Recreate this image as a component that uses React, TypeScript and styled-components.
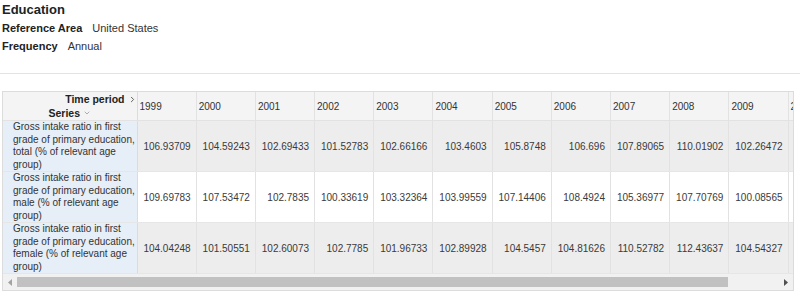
import * as React from "react";
import styled, { createGlobalStyle } from "styled-components";
import { ChevronDown, ChevronRight } from "lucide-react";

const years = [
  "1999", "2000", "2001", "2002", "2003", "2004",
  "2005", "2006", "2007", "2008", "2009", "2010",
];

const series = [
  {
    label: "Gross intake ratio in first grade of primary education, total (% of relevant age group)",
    values: ["106.93709", "104.59243", "102.69433", "101.52783", "102.66166", "103.4603", "105.8748", "106.696", "107.89065", "110.01902", "102.26472", ""],
  },
  {
    label: "Gross intake ratio in first grade of primary education, male (% of relevant age group)",
    values: ["109.69783", "107.53472", "102.7835", "100.33619", "103.32364", "103.99559", "107.14406", "108.4924", "105.36977", "107.70769", "100.08565", ""],
  },
  {
    label: "Gross intake ratio in first grade of primary education, female (% of relevant age group)",
    values: ["104.04248", "101.50551", "102.60073", "102.7785", "101.96733", "102.89928", "104.5457", "104.81626", "110.52782", "112.43637", "104.54327", ""],
  },
];

const SERIES_COL = 134;
const YEAR_COL = 59.2;

const GlobalStyle = createGlobalStyle`
  html, body {
    margin: 0;
    padding: 0;
    background: #ffffff;
  }
  body {
    font-family: "Liberation Sans", Arial, sans-serif;
    color: #333333;
  }
`;

export default function App() {
  return (
    <>
      <GlobalStyle />
      <Page>
        <Title>Education</Title>
        <MetaRow>
          <MetaLabel>Reference Area</MetaLabel>
          <MetaValue>United States</MetaValue>
        </MetaRow>
        <MetaRow>
          <MetaLabel>Frequency</MetaLabel>
          <MetaValue>Annual</MetaValue>
        </MetaRow>
        <Divider />
        <GridFrame>
          <Viewport>
            <DataTable>
              <colgroup>
                <col style={{ width: SERIES_COL }} />
                {years.map((y) => (
                  <col key={y} style={{ width: YEAR_COL }} />
                ))}
              </colgroup>
              <thead>
                <tr>
                  <CornerCell>
                    <AxisLine $align="right">
                      Time period
                      <ChevronRight size={9} strokeWidth={2.5} color="#555" />
                    </AxisLine>
                    <AxisLine $align="center">
                      Series
                      <ChevronDown size={8} strokeWidth={2} color="#888" />
                    </AxisLine>
                  </CornerCell>
                  {years.map((y) => (
                    <YearCell key={y}>{y}</YearCell>
                  ))}
                </tr>
              </thead>
              <tbody>
                {series.map((s, i) => (
                  <DataRow key={s.label} $shaded={i % 2 === 0}>
                    <SeriesCell>{s.label}</SeriesCell>
                    {s.values.map((v, j) => (
                      <ValueCell key={j}>{v}</ValueCell>
                    ))}
                  </DataRow>
                ))}
              </tbody>
            </DataTable>
          </Viewport>
          <ScrollBar>
            <ScrollArrow $active={false}>
              <svg width="4" height="7" viewBox="0 0 4 7">
                <path d="M4 0 L0 3.5 L4 7 Z" fill="currentColor" />
              </svg>
            </ScrollArrow>
            <ScrollTrack>
              <ScrollThumb />
            </ScrollTrack>
            <ScrollArrow $active>
              <svg width="4" height="7" viewBox="0 0 4 7">
                <path d="M0 0 L4 3.5 L0 7 Z" fill="currentColor" />
              </svg>
            </ScrollArrow>
          </ScrollBar>
        </GridFrame>
      </Page>
    </>
  );
}

const Page = styled.div`
  width: 800px;
  padding: 1px 0 0 2px;
  box-sizing: border-box;
`;

const Title = styled.div`
  font-size: 13px;
  font-weight: bold;
  line-height: 18px;
  color: #222222;
`;

const MetaRow = styled.div`
  display: flex;
  gap: 10px;
  font-size: 11px;
  line-height: 18px;
`;

const MetaLabel = styled.span`
  font-weight: bold;
  color: #222222;
`;

const MetaValue = styled.span`
  color: #333333;
`;

const Divider = styled.div`
  height: 1px;
  background: #e4e4e4;
  margin: 18px 0 17px -2px;
  width: 800px;
`;

const GridFrame = styled.div`
  width: 792px;
  border: 1px solid #dcdcdc;
  box-sizing: border-box;
`;

const Viewport = styled.div`
  overflow: hidden;
`;

const DataTable = styled.table`
  table-layout: fixed;
  border-collapse: collapse;
  width: ${SERIES_COL + YEAR_COL * years.length}px;
  font-size: 10px;
`;

const CornerCell = styled.th`
  height: 27px;
  padding: 0;
  background: #f4f4f4;
  border-right: 1px solid #dcdcdc;
  border-bottom: 1px solid #e2e2e2;
  font-weight: bold;
  color: #222222;
  vertical-align: top;
`;

const AxisLine = styled.div<{ $align: "right" | "center" }>`
  display: flex;
  align-items: center;
  justify-content: ${(p) => (p.$align === "right" ? "flex-end" : "center")};
  gap: 3px;
  line-height: 14px;
  font-size: 10.5px;
`;

const YearCell = styled.th`
  padding: 0 0 0 2px;
  background: #f4f4f4;
  border-right: 1px solid #e2e2e2;
  border-bottom: 1px solid #e2e2e2;
  font-weight: normal;
  text-align: left;
  vertical-align: middle;
  color: #333333;
  white-space: nowrap;
  overflow: hidden;
`;

const DataRow = styled.tr<{ $shaded: boolean }>`
  background: ${(p) => (p.$shaded ? "#ededed" : "#ffffff")};
`;

const SeriesCell = styled.td`
  height: 50px;
  padding: 0 0 0 10px;
  background: #e6eef8;
  border-right: 1px solid #dcdcdc;
  border-bottom: 1px solid #e6e6e6;
  line-height: 12.5px;
  font-size: 10px;
  color: #333333;
  vertical-align: middle;
`;

const ValueCell = styled.td`
  padding: 0 5px 0 0;
  border-right: 1px solid #e2e2e2;
  border-bottom: 1px solid #e6e6e6;
  text-align: right;
  vertical-align: middle;
  color: #3a3a3a;
  white-space: nowrap;
  overflow: hidden;
`;

const ScrollBar = styled.div`
  display: flex;
  align-items: center;
  height: 16px;
  background: #f1f1f1;
`;

const ScrollArrow = styled.div<{ $active: boolean }>`
  width: 14px;
  height: 16px;
  display: flex;
  align-items: center;
  justify-content: center;
  color: ${(p) => (p.$active ? "#505050" : "#a3a3a3")};
`;

const ScrollTrack = styled.div`
  flex: 1;
  height: 10px;
`;

const ScrollThumb = styled.div`
  width: 711px;
  height: 100%;
  background: #c1c1c1;
`;
